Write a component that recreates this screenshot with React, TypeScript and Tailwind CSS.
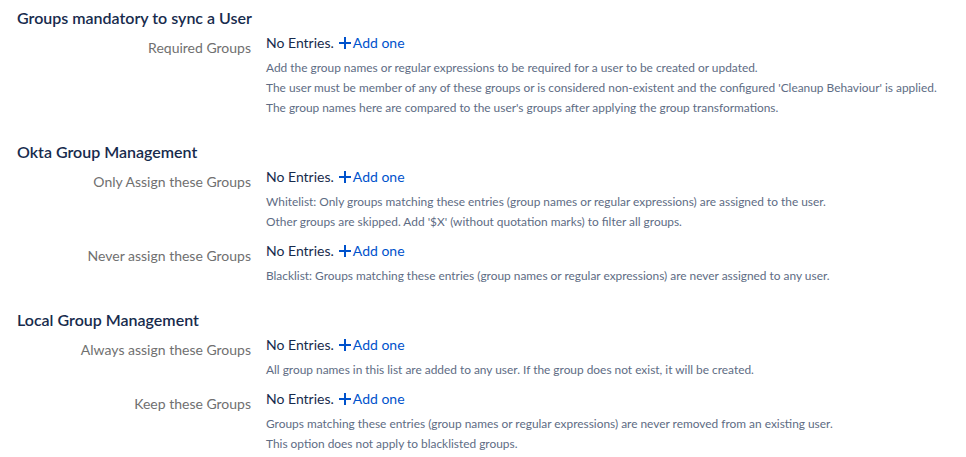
interface Field {
  label: string;
  help: string[];
}

interface Section {
  title: string;
  fields: Field[];
}

const sections: Section[] = [
  {
    title: 'Groups mandatory to sync a User',
    fields: [
      {
        label: 'Required Groups',
        help: [
          'Add the group names or regular expressions to be required for a user to be created or updated.',
          "The user must be member of any of these groups or is considered non-existent and the configured 'Cleanup Behaviour' is applied.",
          "The group names here are compared to the user's groups after applying the group transformations.",
        ],
      },
    ],
  },
  {
    title: 'Okta Group Management',
    fields: [
      {
        label: 'Only Assign these Groups',
        help: [
          'Whitelist: Only groups matching these entries (group names or regular expressions) are assigned to the user.',
          "Other groups are skipped. Add '$X' (without quotation marks) to filter all groups.",
        ],
      },
      {
        label: 'Never assign these Groups',
        help: [
          'Blacklist: Groups matching these entries (group names or regular expressions) are never assigned to any user.',
        ],
      },
    ],
  },
  {
    title: 'Local Group Management',
    fields: [
      {
        label: 'Always assign these Groups',
        help: [
          'All group names in this list are added to any user. If the group does not exist, it will be created.',
        ],
      },
      {
        label: 'Keep these Groups',
        help: [
          'Groups matching these entries (group names or regular expressions) are never removed from an existing user.',
          'This option does not apply to blacklisted groups.',
        ],
      },
    ],
  },
];

function PlusIcon() {
  return (
    <svg width="12" height="12" viewBox="0 0 12 12" className="shrink-0">
      <rect x="0" y="5" width="12" height="2" fill="currentColor" />
      <rect x="5" y="0" width="2" height="12" fill="currentColor" />
    </svg>
  );
}

function FieldRow({ field }: { field: Field }) {
  return (
    <div className="flex">
      <div className="w-[234px] shrink-0 text-right text-[14px] leading-[20px] text-[#707070] mt-[5px]">
        {field.label}
      </div>
      <div className="ml-[15px]">
        <div className="flex items-center text-[14px] leading-[20px]">
          <span className="text-[#172b4d]">No Entries.</span>
          <a href="#" className="ml-[5px] flex items-center gap-[2px] text-[#0052cc]">
            <PlusIcon />
            <span>Add one</span>
          </a>
        </div>
        <div className="mt-[5px] text-[11.9px] leading-[20px] text-[#5e6c84] whitespace-nowrap">
          {field.help.map((line, i) => (
            <div key={i}>{line}</div>
          ))}
        </div>
      </div>
    </div>
  );
}

export default function App() {
  return (
    <div
      className="bg-white min-h-screen pl-[17px] pt-[8px]"
      style={{ fontFamily: 'Lato, "Noto Sans", sans-serif' }}
    >
      {sections.map((section, i) => (
        <div key={i} className={i > 0 ? 'mt-[24px]' : ''}>
          <h3 className="text-[16px] leading-[20px] font-semibold text-[#172b4d]">{section.title}</h3>
          <div className="mt-[5px] flex flex-col gap-[9px]">
            {section.fields.map((field, j) => (
              <FieldRow key={j} field={field} />
            ))}
          </div>
        </div>
      ))}
    </div>
  );
}
